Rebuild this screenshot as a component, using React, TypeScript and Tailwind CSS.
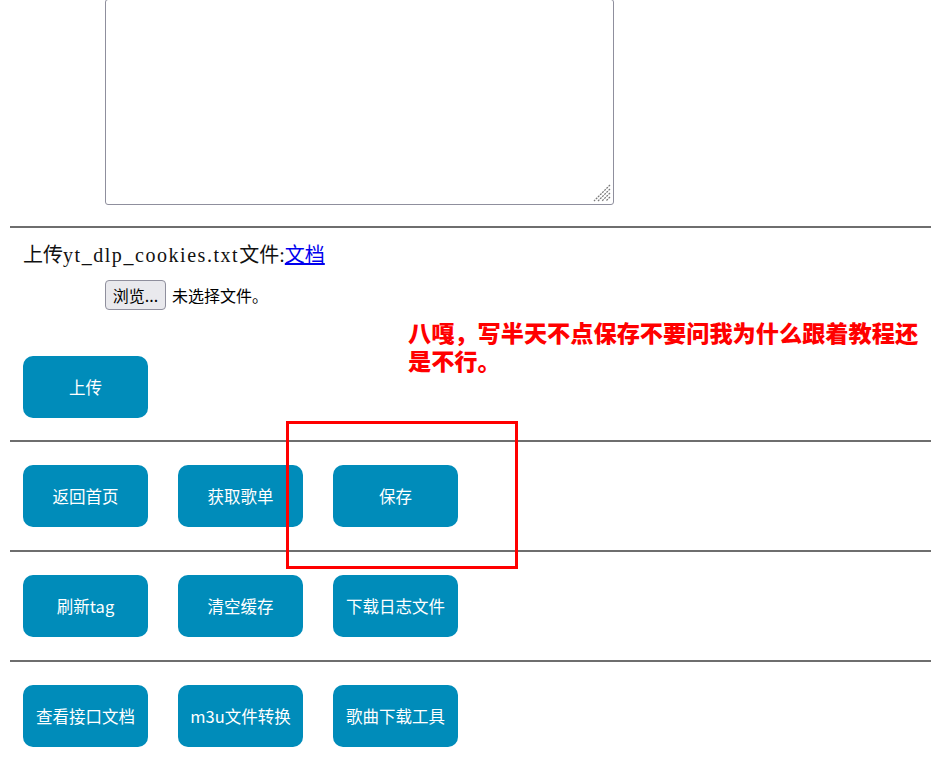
import React from "react";

const cjk = { fontFamily: '"Noto Sans CJK SC", "Noto Sans", sans-serif' };

function Btn({ label }: { label: string }) {
  return (
    <button
      className="w-[125px] h-[62px] rounded-[10px] bg-[#008cba] text-white text-[16.5px] leading-none flex items-center justify-center"
      style={cjk}
    >
      {label}
    </button>
  );
}

function Hr() {
  return <div className="ml-[10px] h-[2px] bg-[#6e6e6e]" />;
}

function Row({ labels }: { labels: string[] }) {
  return (
    <div className="flex gap-[30px] pl-[23px] pt-[23px] pb-[23px]">
      {labels.map((l) => (
        <Btn key={l} label={l} />
      ))}
    </div>
  );
}

export default function App() {
  return (
    <div className="relative w-[931px] h-[766px] overflow-hidden bg-white">
      {/* textarea */}
      <div className="relative -mt-px ml-[105px] w-[509px] h-[206px] border border-[#8f8f9d] rounded-[3px]">
        <svg className="absolute right-[1px] bottom-[1px]" width="20" height="20" viewBox="0 0 20 20">
          <g stroke="#7a7a7a" strokeWidth="1.3" strokeDasharray="2 1">
            <line x1="18" y1="2" x2="2" y2="18" />
            <line x1="18" y1="6" x2="6" y2="18" />
            <line x1="18" y1="10" x2="10" y2="18" />
            <line x1="18" y1="14" x2="14" y2="18" />
          </g>
        </svg>
      </div>

      <div className="mt-[21px]">
        <Hr />
      </div>

      <div className="pl-[23px] pt-[15px]">
        <div
          className="text-[20px] leading-[24px] text-[#111]"
          style={{ fontFamily: '"Liberation Serif", "Noto Sans CJK SC", serif' }}
        >
          上传<span className="tracking-[1.55px]">yt_dlp_cookies.txt</span>文件:
          <a href="#" className="text-[#0000ee] underline">
            文档
          </a>
        </div>
        <div className="flex items-center mt-[13px] ml-[82px] h-[30px]">
          <button
            className="h-[30px] w-[61px] rounded-[4px] border border-[#8f8f9d] bg-[#e9e9ed] text-[16px] text-black leading-none flex items-center justify-center"
            style={cjk}
          >
            浏览...
          </button>
          <span className="ml-[6px] text-[16px] text-black" style={cjk}>
            未选择文件。
          </span>
        </div>
        <div className="mt-[46px] pb-[22px]">
          <Btn label="上传" />
        </div>
      </div>

      <Hr />
      <Row labels={["返回首页", "获取歌单", "保存"]} />
      <Hr />
      <Row labels={["刷新tag", "清空缓存", "下载日志文件"]} />
      <Hr />
      <Row labels={["查看接口文档", "m3u文件转换", "歌曲下载工具"]} />

      {/* annotations */}
      <div
        className="absolute left-[408px] top-[318px] w-[520px] text-[23.2px] leading-[28px] font-black text-[#ff0000]"
        style={cjk}
      >
        八嘎，写半天不点保存不要问我为什么跟着教程还是不行。
      </div>
      <div className="absolute left-[286px] top-[421px] w-[232px] h-[148px] border-[3px] border-[#ff0000]" />
    </div>
  );
}
